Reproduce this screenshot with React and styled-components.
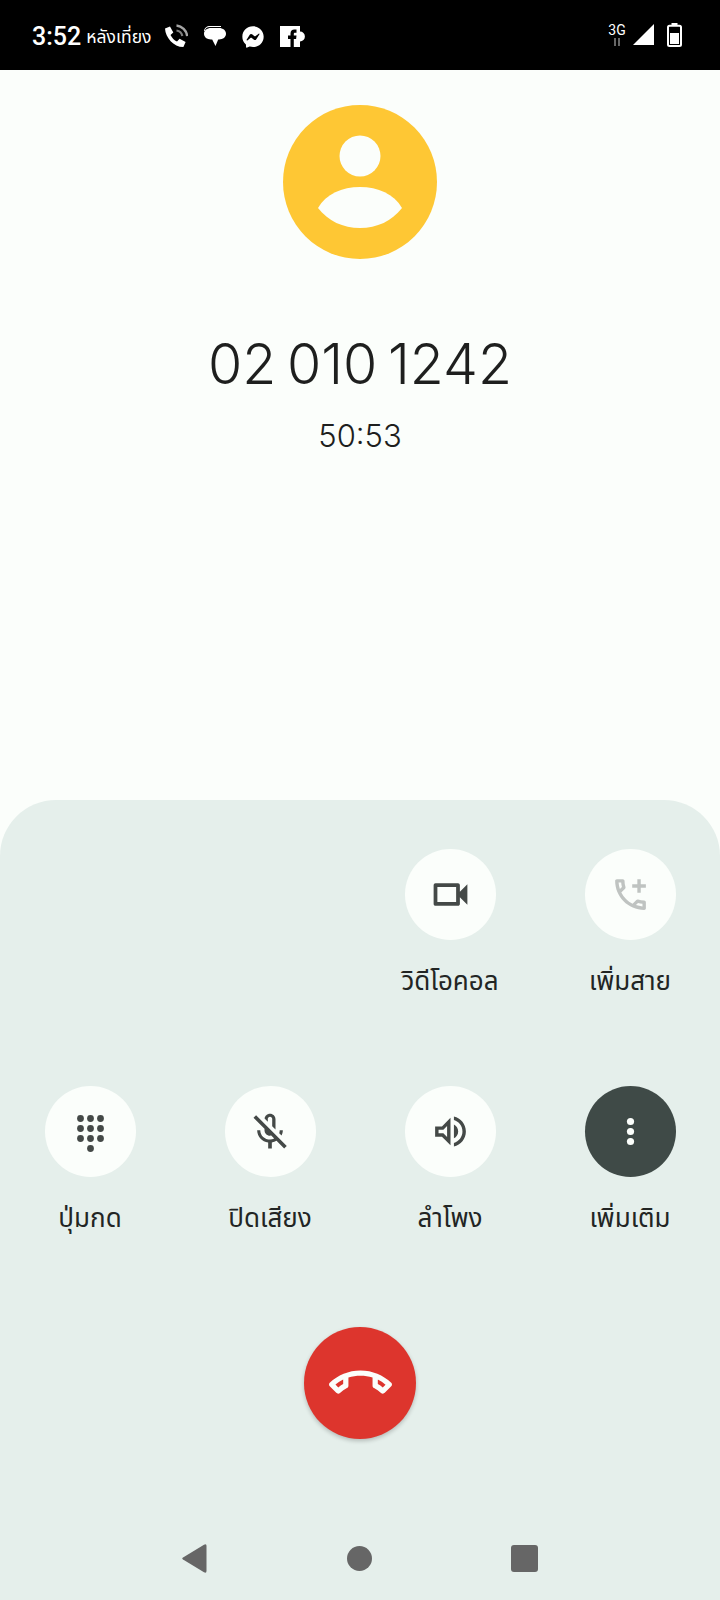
import React from "react";
import styled, { createGlobalStyle } from "styled-components";
import { FaFacebookMessenger } from "react-icons/fa";

const Global = createGlobalStyle`
  html, body { margin: 0; padding: 0; background: #fbfefb; }
  * { box-sizing: border-box; }
`;

const Page = styled.div`
  width: 720px; height: 1600px; display: flex; flex-direction: column;
  background: #fbfefb; font-family: Roboto, "Noto Sans", "Noto Sans Thai", "DejaVu Sans", sans-serif; overflow: hidden;
`;
const StatusBar = styled.header`
  height: 70px; flex: none; background: #000; color: #fff; display: flex; align-items: center;
  justify-content: space-between; padding: 0 38px 0 32px;
`;
const StatusLeft = styled.div`display: flex; align-items: center; padding-top: 3px;`;
const StatusRight = styled.div`display: flex; align-items: center;`;
const Time = styled.span`font-size: 25px; font-weight: 500; line-height: 30px;`;
const Meridiem = styled.span`font-size: 17.5px; line-height: 30px; margin-left: 5px; margin-right: 12px; width: 66px; white-space: nowrap;`;
const NotifIcons = styled.div`display: flex; align-items: center; gap: 16px; color: #fff;`;
const Net = styled.div`display: flex; flex-direction: column; align-items: center; width: 20px; margin: -2px 6px 0 0;`;
const NetLabel = styled.span`font-size: 14px; line-height: 15px;`;
const SignalSlot = styled.div`display: flex; margin-right: 13px; margin-top: -2px;`;
const Callee = styled.section`
  height: 730px; flex: none; display: flex; flex-direction: column; align-items: center; padding-top: 35px;
`;
const Avatar = styled.div`width: 154px; height: 154px; flex: none;`;
const Number = styled.h1`
  margin: 70px 0 0; font-family: Inter, sans-serif; font-size: 55.5px; font-weight: 350; line-height: 70px; color: #1e1f1e;
  white-space: nowrap; word-spacing: -5px;
`;
const Duration = styled.div`
  margin-top: 17px; font-family: Inter, sans-serif; font-size: 31px; font-weight: 300; line-height: 40px; color: #1e1f1e;
`;
const Panel = styled.section`
  flex: 1; background: #e5efeb; border-radius: 56px 56px 0 0; display: flex; flex-direction: column; align-items: center;
  padding-top: 49px;
`;
const Grid = styled.div`
  width: 720px; display: grid; grid-template-columns: repeat(4, 180px); row-gap: 85px; justify-items: center;
`;
const Action = styled.div`
  grid-column: ${(p) => p.$col || "auto"}; display: flex; flex-direction: column; align-items: center; gap: 21px; width: 180px;
`;
const Round = styled.div`
  width: 91px; height: 91px; border-radius: 50%; display: flex; align-items: center; justify-content: center;
  background: ${(p) => (p.$active ? "#3f4a47" : "#fbfefb")};
  color: ${(p) => (p.$dim ? "#bfc3c1" : p.$active ? "#fbfefb" : "#444947")};
`;
const Label = styled.span`font-size: 26px; line-height: 40px; color: #222524; white-space: nowrap;`;
const EndCall = styled.div`
  margin-top: 89px; width: 112px; height: 112px; border-radius: 50%; background: #dd352d; color: #fbfefb;
  display: flex; align-items: center; justify-content: center; box-shadow: 0 2px 4px rgba(0,0,0,.22);
`;
const Nav = styled.nav`
  margin-top: auto; height: 84px; width: 356px; display: flex; align-items: center; justify-content: space-between;
`;
const Back = styled.svg`width: 25px; height: 29px; fill: #666;`;
const Home = styled.div`width: 25px; height: 25px; border-radius: 50%; background: #666;`;
const Recent = styled.div`width: 27px; height: 27px; border-radius: 3px; background: #666;`;

const Ico = ({ d, size = 45 }) => (
  <svg width={size} height={size} viewBox="0 0 24 24" fill="currentColor"><path d={d} /></svg>
);

const video = "M15 8v8H5V8h10m1-2H4c-.55 0-1 .45-1 1v10c0 .55.45 1 1 1h12c.55 0 1-.45 1-1v-3.5l4 4v-11l-4 4V7c0-.55-.45-1-1-1z";
const addCall = "M6.54 5c.06.89.21 1.76.45 2.59l-1.2 1.2c-.41-1.2-.67-2.47-.76-3.79h1.51m9.86 12.02c.85.24 1.72.39 2.6.45v1.49c-1.32-.09-2.59-.35-3.8-.75l1.2-1.19M7.5 3H4c-.55 0-1 .45-1 1 0 9.39 7.61 17 17 17 .55 0 1-.45 1-1v-3.49c0-.55-.45-1-1-1-1.24 0-2.45-.2-3.57-.57-.1-.04-.21-.05-.31-.05-.26 0-.51.1-.71.29l-2.2 2.2c-2.83-1.45-5.15-3.76-6.59-6.59l2.2-2.2c.28-.28.36-.67.25-1.02C8.7 6.45 8.5 5.25 8.5 4c0-.55-.45-1-1-1zM21 6h-3V3h-2v3h-3v2h3v3h2V8h3z";
const micOff = "M10.8 4.9c0-.66.54-1.2 1.2-1.2s1.2.54 1.2 1.2l-.01 3.91L15 10.6V5c0-1.66-1.34-3-3-3-1.54 0-2.79 1.16-2.96 2.65l1.76 1.76V4.9zM19 11h-1.7c0 .58-.1 1.13-.27 1.64l1.27 1.27c.44-.88.7-1.87.7-2.91zM4.41 2.86L3 4.27l6 6V11c0 1.66 1.34 3 3 3 .23 0 .44-.03.65-.08l1.66 1.66c-.71.33-1.5.52-2.31.52-2.76 0-5.3-2.1-5.3-5.1H5c0 3.41 2.72 6.23 6 6.72V21h2v-3.28c.91-.13 1.77-.45 2.55-.9l4.18 4.18 1.41-1.41L4.41 2.86z";
const speaker = "M3 9v6h4l5 5V4L7 9H3zm7-.17v6.34L7.83 13H5v-2h2.83L10 8.83zM16.5 12c0-1.77-1.02-3.29-2.5-4.03v8.05c1.48-.73 2.5-2.25 2.5-4.02zM14 3.23v2.06c2.89.86 5 3.54 5 6.71s-2.11 5.85-5 6.71v2.06c4.01-.91 7-4.49 7-8.77 0-4.28-2.99-7.86-7-8.77z";
const callEnd = "M18.59 10.52c1.05.51 2.04 1.15 2.96 1.91l-1.07 1.07c-.58-.47-1.21-.89-1.88-1.27v-1.71m-13.2 0v1.7c-.65.37-1.28.79-1.87 1.27l-1.07-1.07c.91-.75 1.9-1.38 2.94-1.9M12 7C7.46 7 3.34 8.78.29 11.67c-.18.18-.29.43-.29.71s.11.53.29.71l2.48 2.48c.18.18.43.29.71.29.27 0 .52-.11.7-.28.79-.74 1.69-1.36 2.66-1.85.33-.16.56-.5.56-.9v-3.1C8.85 9.25 10.4 9 12 9s3.15.25 4.59.73v3.1c0 .39.23.74.56.9.98.49 1.87 1.12 2.67 1.85.18.18.43.28.7.28.28 0 .53-.11.71-.29l2.48-2.48c.18-.18.29-.43.29-.71s-.11-.53-.29-.71C20.66 8.78 16.54 7 12 7z";

const Dialpad = () => (
  <svg width="45" height="45" viewBox="0 0 45 45" fill="currentColor">
    {[0, 1, 2].map((r) => [0, 1, 2].map((c) => <circle key={`${r}${c}`} cx={12.5 + c * 10} cy={9.5 + r * 10} r="3.4" />))}
    <circle cx="22.5" cy="39.5" r="3.4" />
  </svg>
);
const MoreVert = () => (
  <svg width="45" height="45" viewBox="0 0 45 45" fill="currentColor">
    <circle cx="22.5" cy="12.5" r="3.6" /><circle cx="22.5" cy="22.5" r="3.6" /><circle cx="22.5" cy="32.5" r="3.6" />
  </svg>
);
const AvatarArt = () => (
  <svg width="154" height="154" viewBox="0 0 154 154">
    <circle cx="77" cy="77" r="77" fill="#fec734" />
    <circle cx="77" cy="51" r="20.5" fill="#fbfefb" />
    <path d="M35 103C43 89 59 82 77 82s34 7 42 21C109 116 94 123 77 123s-32-7-42-20z" fill="#fbfefb" />
  </svg>
);
const CallVibrate = () => (
  <svg width="24" height="25" viewBox="0 0 24 25" fill="none">
    <path d="M1 4.500 6 2.500l3.300 6-2.800 2.500c1.500 3 3.700 5.200 6.500 6.600l2.600-2.800 6 3.300-2.200 5C9.500 23 1.500 13.500 1 4.500z" fill="#fff" />
    <path d="M12.500 1.500c5.500.5 10 5 10.700 10.500" stroke="#a5a5a5" strokeWidth="2.400" />
    <path d="M12.500 6.500c3 .4 5.300 2.700 5.800 5.500" stroke="#808080" strokeWidth="2.200" />
  </svg>
);
const Bubble = () => (
  <svg width="22" height="21" viewBox="0 0 22 21" fill="#fff">
    <path d="M6 0h11v1H6C3 1 1.200 2.500.800 5H0c.3-3 2.800-5 6-5z" />
    <path d="M7 2h8c4 0 7 2.300 7 5.800S19 13.500 15 13.500h-.8L11.500 20l-3.300-6.500H7c-4 0-7-2.200-7-5.700S3 2 7 2z" />
  </svg>
);
const FbNotif = () => (
  <svg width="27" height="21" viewBox="0 0 27 21">
    <path d="M0 0h20v5.600a4.900 4.900 0 0 1 0 9.800V21H0z" fill="#fff" />
    <path d="M10.500 21v-8H8V9.600h2.500V7.400C10.500 4.800 12 3.400 14.300 3.400h2.200v3.300h-1.400c-.9 0-1.300.5-1.300 1.300v1.600h2.700l-.4 3.400H13.800v8z" fill="#000" />
  </svg>
);
const Signal = () => (
  <svg width="21" height="21" viewBox="0 0 21 21"><path d="M21 0v21H0z" fill="#fff" /></svg>
);
const Battery = () => (
  <svg width="15" height="24" viewBox="0 0 15 24" fill="none">
    <path d="M4.500 0h6v2h-6z" fill="#fff" />
    <rect x="1" y="2.800" width="13" height="20.200" rx="1.500" stroke="#fff" strokeWidth="2" />
    <rect x="3" y="10" width="9" height="11" fill="#fff" />
  </svg>
);
const Arrows = () => (
  <svg width="8" height="8" viewBox="0 0 8 8" fill="#666"><path d="M1 0h2v8H1zM5 0h2v8H5z" /></svg>
);

const row1 = [
  { label: "วิดีโอคอล", icon: <Ico d={video} />, col: 3 },
  { label: "เพิ่มสาย", icon: <Ico d={addCall} size={41} />, dim: true, col: 4 },
];
const row2 = [
  { label: "ปุ่มกด", icon: <Dialpad /> },
  { label: "ปิดเสียง", icon: <Ico d={micOff} size={44} /> },
  { label: "ลำโพง", icon: <Ico d={speaker} size={41} /> },
  { label: "เพิ่มเติม", icon: <MoreVert />, active: true },
];

export default function App() {
  return (
    <Page>
      <Global />
      <StatusBar>
        <StatusLeft>
          <Time>3:52</Time>
          <Meridiem>หลังเที่ยง</Meridiem>
          <NotifIcons>
            <CallVibrate />
            <Bubble />
            <FaFacebookMessenger size={22} />
            <FbNotif />
          </NotifIcons>
        </StatusLeft>
        <StatusRight>
          <Net><NetLabel>3G</NetLabel><Arrows /></Net>
          <SignalSlot><Signal /></SignalSlot>
          <Battery />
        </StatusRight>
      </StatusBar>
      <Callee>
        <Avatar><AvatarArt /></Avatar>
        <Number>02 010 1242</Number>
        <Duration>50:53</Duration>
      </Callee>
      <Panel>
        <Grid>
          {[...row1, ...row2].map((a) => (
            <Action key={a.label} $col={a.col}>
              <Round $active={a.active} $dim={a.dim}>{a.icon}</Round>
              <Label>{a.label}</Label>
            </Action>
          ))}
        </Grid>
        <EndCall><Ico d={callEnd} size={63} /></EndCall>
        <Nav>
          <Back viewBox="0 0 25 29"><path d="M1 13.500 22 .8Q24.500-.5 24.500 2V27q0 2.500-2.500 1.200L1 15.500q-1.500-1 0-2z" /></Back>
          <Home />
          <Recent />
        </Nav>
      </Panel>
    </Page>
  );
}
